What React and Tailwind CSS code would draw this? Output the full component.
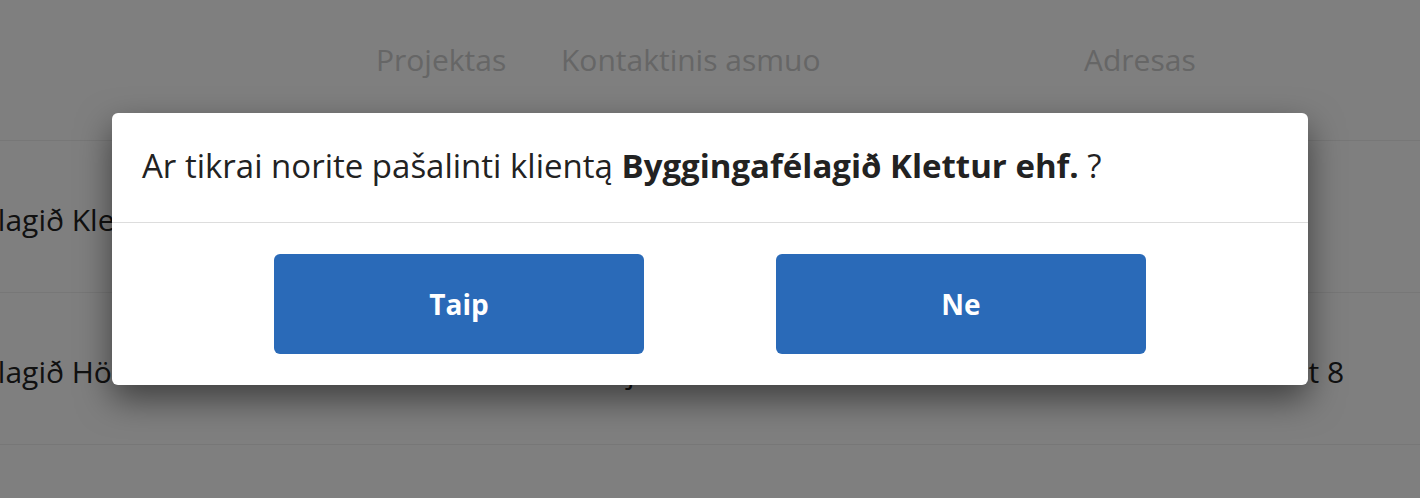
import React from "react";

const font = { fontFamily: "'Open Sans', Lato, sans-serif" };

const rows = [
  { name: "Byggingafélagið Klettur ehf.", project: "", contact: "Sigrún Pálsdóttir", address: "Laugavegur 12" },
  { name: "Byggingafélagið Höfði ehf.", project: "", contact: "Ari Bjarnason", address: "Suðurlandsbraut 8" },
];

function Table() {
  return (
    <div className="-ml-[175px] text-[30px] text-[#222]">
      <div className="grid grid-cols-[551px_185px_523px_1fr] h-[141px] pt-[40px] border-b border-[#efefef] text-[#cccccc] leading-[40px]">
        <div />
        <div>Projektas</div>
        <div>Kontaktinis asmuo</div>
        <div>Adresas</div>
      </div>
      {rows.map((r) => (
        <div
          key={r.name}
          className="grid grid-cols-[551px_185px_523px_1fr] items-center h-[152px] pt-[6px] border-b border-[#efefef] leading-[40px]"
        >
          <div className="pl-[20px] whitespace-nowrap">{r.name}</div>
          <div>{r.project}</div>
          <div className="whitespace-nowrap">{r.contact}</div>
          <div className="whitespace-nowrap">{r.address}</div>
        </div>
      ))}
    </div>
  );
}

export default function App() {
  return (
    <div className="relative h-[498px] w-full overflow-hidden bg-white" style={font}>
      <Table />
      <div className="absolute inset-0 flex items-center justify-center bg-black/50">
        <div className="w-[1196px] rounded-md bg-white shadow-[0_14px_34px_rgba(0,0,0,0.5)]">
          <div className="flex h-[110px] items-center border-b border-[#dddddd] px-[30px] pb-[4px] text-[33px] text-[#222]">
            <p>
              Ar tikrai norite pašalinti klientą{" "}
              <span className="font-bold">Byggingafélagið Klettur ehf.</span> ?
            </p>
          </div>
          <div className="flex justify-center gap-[132px] py-[31px]">
            <button className="h-[100px] w-[370px] rounded-md bg-[#2a6ab8] text-[28px] font-bold text-white">
              Taip
            </button>
            <button className="h-[100px] w-[370px] rounded-md bg-[#2a6ab8] text-[28px] font-bold text-white">
              Ne
            </button>
          </div>
        </div>
      </div>
    </div>
  );
}
